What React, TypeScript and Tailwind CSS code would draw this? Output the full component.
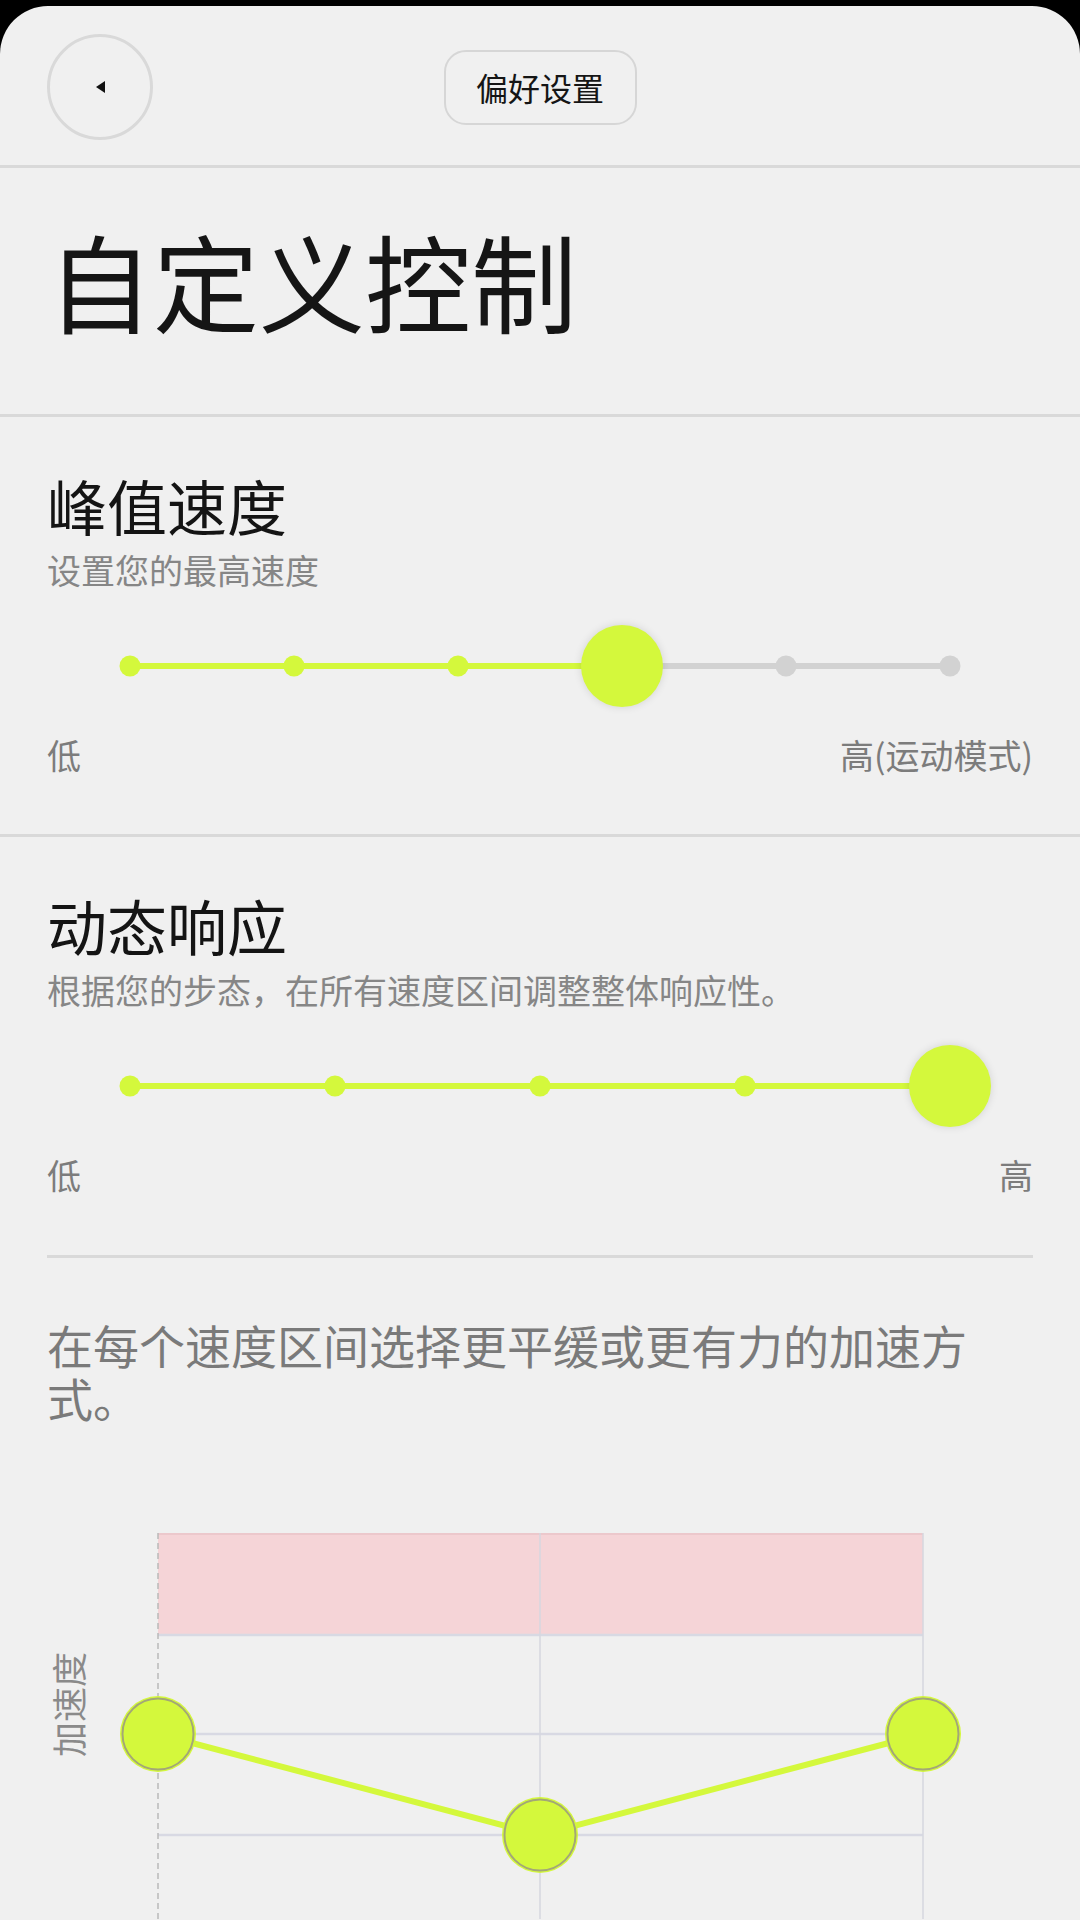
const font = { fontFamily: '"Noto Sans CJK SC", "Noto Sans", sans-serif' };

const LIME = '#d4f83c';

interface StepSliderProps {
  steps: number;
  value: number;
}

function StepSlider({ steps, value }: StepSliderProps) {
  const pct = (i: number) => (i / (steps - 1)) * 100;
  return (
    <div className="relative mx-[83px] h-[82px]">
      <div className="absolute left-0 right-0 top-1/2 h-[6px] -translate-y-1/2 rounded-full bg-[#d2d2d2]" />
      <div
        className="absolute left-0 top-1/2 h-[6px] -translate-y-1/2 rounded-full bg-[#d4f83c]"
        style={{ width: `${pct(value)}%` }}
      />
      {Array.from({ length: steps }).map((_, i) =>
        i === value ? (
          <div
            key={i}
            className="absolute top-1/2 h-[82px] w-[82px] -translate-x-1/2 -translate-y-1/2 rounded-full bg-[#d4f83c] shadow-[0_0_8px_rgba(0,0,0,0.12)]"
            style={{ left: `${pct(i)}%` }}
          />
        ) : (
          <div
            key={i}
            className={`absolute top-1/2 h-[21px] w-[21px] -translate-x-1/2 -translate-y-1/2 rounded-full ${
              i < value ? 'bg-[#d4f83c]' : 'bg-[#d2d2d2]'
            }`}
            style={{ left: `${pct(i)}%` }}
          />
        ),
      )}
    </div>
  );
}

interface SectionProps {
  title: string;
  subtitle: string;
  steps: number;
  value: number;
  high: string;
}

function SliderSection({ title, subtitle, steps, value, high }: SectionProps) {
  return (
    <div className="flex flex-col">
      <div className="text-[60px] leading-none text-[#141414]">{title}</div>
      <div className="mt-[18px] text-[34px] leading-none text-[#868686]">{subtitle}</div>
      <div className="mt-[38px]">
        <StepSlider steps={steps} value={value} />
      </div>
      <div className="mt-[31px] flex justify-between text-[34px] leading-none text-[#7c7c7c]">
        <span>低</span>
        <span>{high}</span>
      </div>
    </div>
  );
}

function AccelChart() {
  const pts = [
    [40, 201],
    [422, 302],
    [805, 201],
  ];
  return (
    <svg width="845" height="386" viewBox="0 0 845 386" className="block overflow-visible">
      <rect x="40" y="0" width="765" height="102" fill="#f5d4d7" />
      <line x1="40" y1="1" x2="805" y2="1" stroke="#ecc8cc" strokeWidth="2" />
      {[102, 201, 302].map((y) => (
        <line key={y} x1="40" y1={y} x2="805" y2={y} stroke="#d8d9e3" strokeWidth="2.5" />
      ))}
      <line x1="422" y1="0" x2="422" y2="386" stroke="#d6d7df" strokeWidth="1.5" />
      <line x1="805" y1="0" x2="805" y2="386" stroke="#d6d7df" strokeWidth="1.5" />
      <line x1="40" y1="0" x2="40" y2="386" stroke="#b9b9b9" strokeWidth="1.5" strokeDasharray="6 4" />
      <polyline
        points={pts.map((p) => p.join(',')).join(' ')}
        fill="none"
        stroke={LIME}
        strokeWidth="6"
      />
      {pts.map(([x, y]) => (
        <g key={x}>
          <circle cx={x} cy={y} r="38" fill={LIME} />
          <circle cx={x} cy={y} r="35.5" fill={LIME} stroke="#a3a777" strokeWidth="2" />
        </g>
      ))}
    </svg>
  );
}

export default function App() {
  return (
    <div className="min-h-[1920px] w-[1080px] bg-black pt-[6px]" style={font}>
      <div className="h-[1914px] overflow-hidden rounded-t-[48px] bg-[#f0f0f0]">
        {/* header */}
        <div className="grid grid-cols-[1fr_auto_1fr] items-center px-[47px] pt-[28px] pb-[25px]">
          <button className="flex h-[106px] w-[106px] items-center justify-center rounded-full border-[3px] border-[#d9d9d9]">
            <svg width="12" height="14" viewBox="0 0 12 14">
              <path d="M11 1 L2 7 L11 13 Z" fill="#111" />
            </svg>
          </button>
          <div className="flex h-[75px] w-[193px] items-center justify-center rounded-[22px] border-2 border-[#d6d6d6] text-[32px] text-[#151515]">
            偏好设置
          </div>
          <div />
        </div>
        <div className="h-[3px] bg-[#d9d9d9]" />

        {/* title */}
        <div className="px-[47px] pt-[58px] pb-[82px]">
          <h1 className="text-[106px] leading-none font-normal text-[#151515]">自定义控制</h1>
        </div>
        <div className="h-[3px] bg-[#d9d9d9]" />

        <div className="px-[47px] pt-[58px] pb-[62px]">
          <SliderSection title="峰值速度" subtitle="设置您的最高速度" steps={6} value={3} high="高(运动模式)" />
        </div>
        <div className="h-[3px] bg-[#d9d9d9]" />

        <div className="px-[47px] pt-[58px]">
          <SliderSection
            title="动态响应"
            subtitle="根据您的步态，在所有速度区间调整整体响应性。"
            steps={5}
            value={4}
            high="高"
          />
          <div className="mt-[63px] h-[3px] bg-[#d9d9d9]" />

          <p className="mt-[60px] w-[940px] text-[46px] leading-[53px] text-[#7a7a7a]">
            在每个速度区间选择更平缓或更有力的加速方式。
          </p>

          <div className="mt-[109px] flex">
            <div className="w-[71px] pt-[119px] pl-[3px]">
              <div className="rotate-180 text-[35px] leading-none text-[#8a8a8a] [writing-mode:vertical-rl] [text-orientation:sideways]">
                加速度
              </div>
            </div>
            <AccelChart />
          </div>
        </div>
      </div>
    </div>
  );
}
